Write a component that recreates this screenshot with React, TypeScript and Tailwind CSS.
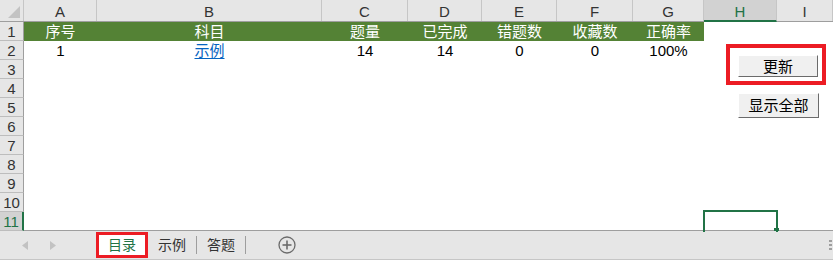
const cols = [
  { key: "A", w: "w-[73px]" },
  { key: "B", w: "w-[225px]" },
  { key: "C", w: "w-[86px]" },
  { key: "D", w: "w-[74px]" },
  { key: "E", w: "w-[75px]" },
  { key: "F", w: "w-[76px]" },
  { key: "G", w: "w-[71px]" },
  { key: "H", w: "w-[73px]" },
  { key: "I", w: "flex-1" },
];

const titles = ["序号", "科目", "题量", "已完成", "错题数", "收藏数", "正确率"];
const values = ["1", "示例", "14", "14", "0", "0", "100%"];

const RowHead = ({ n }: { n: number }) => {
  const active = n === 11;
  return (
    <div
      className={
        active
          ? "w-[24px] shrink-0 flex items-center justify-center bg-[#d2d2d2] text-[#217346] border-r-2 border-r-[#217346] border-b border-b-[#bdbdbd]"
          : "w-[24px] shrink-0 flex items-center justify-center bg-[#e6e6e6] text-[#333] border-r border-r-[#9e9e9e] border-b border-b-[#bdbdbd]"
      }
    >
      {n}
    </div>
  );
};

const SheetButton = ({ label }: { label: string }) => (
  <div className="w-full h-full flex items-center justify-center bg-[#f0f0f0] border border-t-white border-l-white border-r-[#6b6b6b] border-b-[#6b6b6b] text-[15px] text-black">
    {label}
  </div>
);

export default function App() {
  return (
    <div className="relative w-[833px] h-[260px] overflow-hidden bg-white text-[15px] leading-none font-['Liberation_Sans','Noto_Sans_CJK_SC',sans-serif] select-none">
      {/* Column headers */}
      <div className="flex h-[22px] border-b border-b-[#9e9e9e] bg-[#e6e6e6]">
        <div className="w-[24px] shrink-0 relative border-r border-r-[#c6c6c6]">
          <svg className="absolute right-[3px] bottom-[3px]" width="12" height="12" viewBox="0 0 12 12">
            <polygon points="12,0 12,12 0,12" fill="#c3c3c3" />
          </svg>
        </div>
        {cols.map((c) =>
          c.key === "H" ? (
            <div
              key={c.key}
              className={`${c.w} shrink-0 flex items-center justify-center pt-[2px] bg-[#d2d2d2] text-[#217346] border-r border-r-[#c6c6c6] border-b-2 border-b-[#217346] -mb-px`}
            >
              {c.key}
            </div>
          ) : (
            <div
              key={c.key}
              className={`${c.w} shrink-0 flex items-center justify-center pt-[2px] text-[#333] border-r border-r-[#c6c6c6]`}
            >
              {c.key}
            </div>
          )
        )}
      </div>

      {/* Row 1 */}
      <div className="flex h-[19px]">
        <RowHead n={1} />
        {titles.map((t, i) => (
          <div
            key={t}
            className={`${cols[i].w} shrink-0 flex items-center justify-center bg-[#548235] text-white`}
          >
            {t}
          </div>
        ))}
      </div>

      {/* Row 2 */}
      <div className="flex h-[19px]">
        <RowHead n={2} />
        {values.map((v, i) => (
          <div
            key={i}
            className={`${cols[i].w} shrink-0 flex items-center justify-center text-black`}
          >
            {i === 1 ? <span className="text-[#0563c1] underline underline-offset-2">{v}</span> : v}
          </div>
        ))}
      </div>

      {[3, 4, 5, 6, 7, 8, 9, 10, 11].map((n) => (
        <div key={n} className="flex h-[19px]">
          <RowHead n={n} />
          <div className="flex-1" />
        </div>
      ))}

      {/* Sheet tabs bar */}
      <div className="flex items-center h-[30px] bg-[#e6e6e6] border-t border-t-[#9e9e9e] border-b border-b-[#c6c6c6] mt-[-1px] text-[14px]">
        <div className="flex items-center gap-[22px] pl-[22px] w-[96px]">
          <svg width="6" height="9" viewBox="0 0 6 9">
            <polygon points="6,0 6,9 0,4.5" fill="#c2c2c2" />
          </svg>
          <svg width="6" height="9" viewBox="0 0 6 9">
            <polygon points="0,0 0,9 6,4.5" fill="#c2c2c2" />
          </svg>
        </div>
        <div className="w-[52px] h-[26px] flex items-center justify-center bg-white text-[#217346] border-[3px] border-[#ec1c24]">
          目录
        </div>
        <div className="px-[10px] text-[#333]">示例</div>
        <div className="w-px h-[18px] bg-[#9e9e9e]" />
        <div className="px-[10px] text-[#333]">答题</div>
        <div className="w-px h-[18px] bg-[#9e9e9e]" />
        <svg className="ml-[32px]" width="18" height="18" viewBox="0 0 18 18">
          <circle cx="9" cy="9" r="8" fill="none" stroke="#6b6b6b" strokeWidth="1.3" />
          <line x1="9" y1="4.5" x2="9" y2="13.5" stroke="#6b6b6b" strokeWidth="1.6" />
          <line x1="4.5" y1="9" x2="13.5" y2="9" stroke="#6b6b6b" strokeWidth="1.6" />
        </svg>
        <div className="ml-auto mr-[1px] flex flex-col gap-[2px]">
          <div className="w-[3px] h-[2px] bg-[#9e9e9e]" />
          <div className="w-[3px] h-[2px] bg-[#9e9e9e]" />
          <div className="w-[3px] h-[2px] bg-[#9e9e9e]" />
        </div>
      </div>
      <div className="ml-[577px] w-[39px] h-[2px] bg-[#c6c6c6]" />

      {/* Selected cell H11 */}
      <div className="absolute left-[703px] top-[210px] w-[75px] h-[22px] border-2 border-b-0 border-[#217346]" />
      <div className="absolute left-[774px] top-[228px] w-[5px] h-[3px] bg-[#217346]" />

      {/* Floating buttons */}
      <div className="absolute left-[726px] top-[44px] w-[100px] h-[41px] border-[4px] border-[#ec1c24] p-[7px_4px_4px_8px]">
        <SheetButton label="更新" />
      </div>
      <div className="absolute left-[738px] top-[93px] w-[81px] h-[25px]">
        <SheetButton label="显示全部" />
      </div>
    </div>
  );
}
